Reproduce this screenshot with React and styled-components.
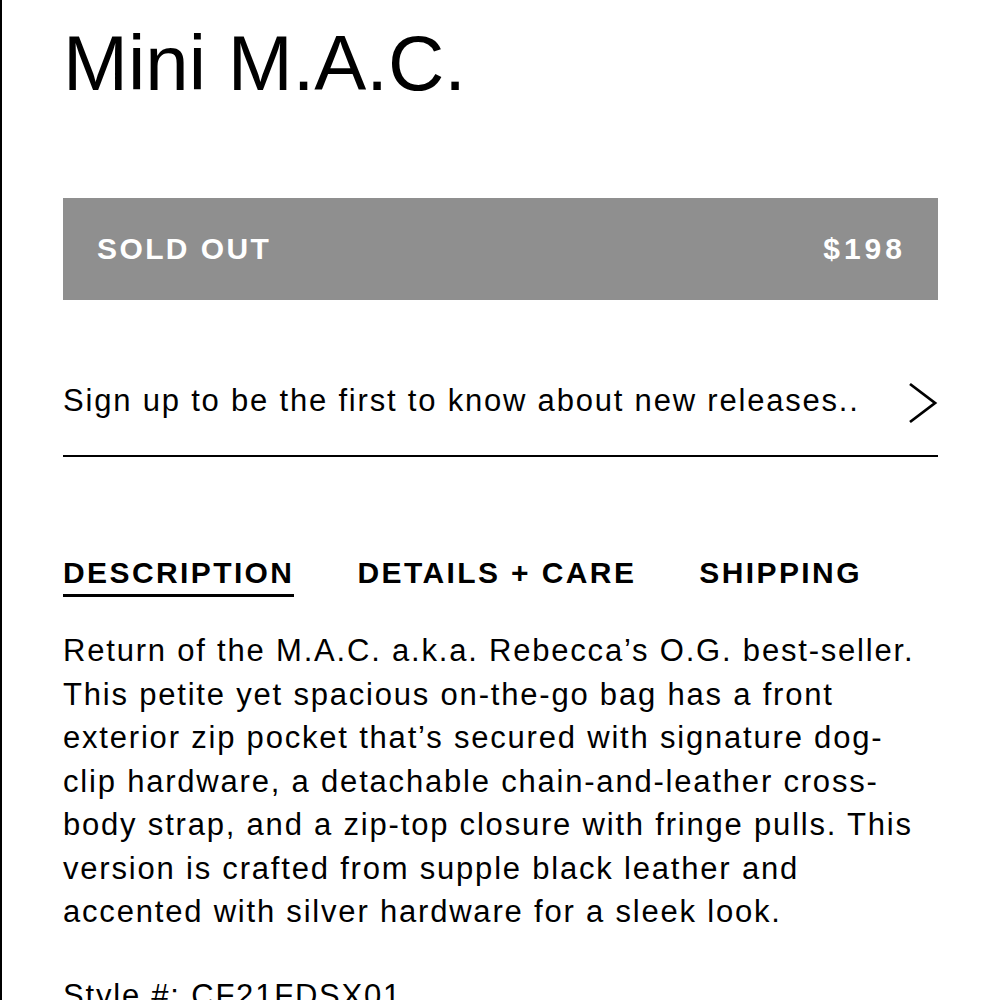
import React from "react";
import styled, { createGlobalStyle } from "styled-components";

const Global = createGlobalStyle`
  html, body { margin: 0; padding: 0; background: #fff; }
  body { font-family: "Liberation Sans", Arial, sans-serif; color: #000; }
`;

const Page = styled.div`
  box-sizing: border-box;
  min-height: 1000px;
  border-left: 2px solid #000;
  padding: 24px 62px 0 61px;
  overflow: hidden;
`;

const Title = styled.h1`
  margin: 0;
  font-size: 78px;
  font-weight: 400;
  line-height: 1;
  letter-spacing: 0;
`;

const SoldOutBar = styled.div`
  margin-top: 96px;
  height: 102px;
  background: #8f8f8f;
  color: #fff;
  display: flex;
  align-items: center;
  justify-content: space-between;
  padding: 0 32px 0 34px;
  font-size: 30px;
  font-weight: 700;
  letter-spacing: 2.4px;
`;

const Price = styled.span`
  letter-spacing: 4px;
`;

const SignupRow = styled.div`
  margin-top: 60px;
  padding: 25px 0 0 0;
  height: 70px;
  border-bottom: 2px solid #000;
  display: flex;
  justify-content: space-between;
  align-items: flex-start;
`;

const SignupText = styled.span`
  font-size: 31px;
  line-height: 1;
  letter-spacing: 1.8px;
`;

const Chevron = styled.svg`
  display: block;
  margin-top: -3px;
`;

const Tabs = styled.div`
  margin-top: 101px;
  display: flex;
  gap: 63px;
`;

const Tab = styled.div`
  font-size: 30px;
  font-weight: 700;
  line-height: 1;
  letter-spacing: 2.4px;
  padding-bottom: 6px;
  border-bottom: 3px solid ${(p) => (p.$active ? "#000" : "transparent")};
`;

const Body = styled.div`
  margin-top: 32px;
  max-width: 862px;
  font-size: 31px;
  line-height: 43.5px;
  letter-spacing: 1.8px;
`;

const Para = styled.p`
  margin: 0 0 40px 0;
`;

export default function App() {
  return (
    <>
      <Global />
      <Page>
        <Title>Mini M.A.C.</Title>
        <SoldOutBar>
          <span>SOLD OUT</span>
          <Price>$198</Price>
        </SoldOutBar>
        <SignupRow>
          <SignupText>Sign up to be the first to know about new releases..</SignupText>
          <Chevron width="30" height="42" viewBox="0 0 30 42">
            <polyline points="2,2 27,21 2,40" fill="none" stroke="#000" strokeWidth="2.8" />
          </Chevron>
        </SignupRow>
        <Tabs>
          <Tab $active>DESCRIPTION</Tab>
          <Tab>DETAILS + CARE</Tab>
          <Tab>SHIPPING</Tab>
        </Tabs>
        <Body>
          <Para>
            Return of the M.A.C. a.k.a. Rebecca’s O.G. best-seller. This petite yet spacious
            on-the-go bag has a front exterior zip pocket that’s secured with signature dog-clip
            hardware, a detachable chain-and-leather cross-body strap, and a zip-top closure with
            fringe pulls. This version is crafted from supple black leather and accented with silver
            hardware for a sleek look.
          </Para>
          <Para>Style #: CF21FDSX01</Para>
        </Body>
      </Page>
    </>
  );
}
